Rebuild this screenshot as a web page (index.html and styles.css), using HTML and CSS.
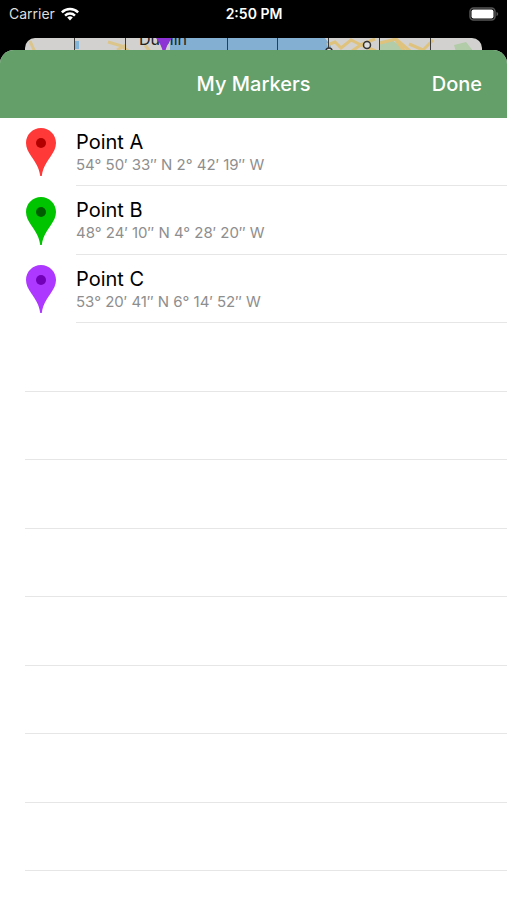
FILE: index.html
```html
<!DOCTYPE html>
<html lang="en">
<head>
    <meta charset="UTF-8">
    <meta name="viewport" content="width=device-width, initial-scale=1.0">
    <title>My Markers</title>
    <link rel="stylesheet" href="styles.css">
</head>
<body>
    <svg class="defs" aria-hidden="true">
        <symbol id="pin" viewBox="0 0 30 48">
            <path fill="currentColor" d="M15 0C6.700 0 0 6.700 0 15c0 5 2.400 9 5.200 13.200C9.500 34.500 13 39 14.200 48h1.600C17 39 20.500 34.500 24.800 28.200 27.600 24 30 20 30 15 30 6.700 23.300 0 15 0z"/>
            <circle class="pin-dot" cx="15" cy="15" r="5"/>
        </symbol>
    </svg>

    <div class="status-bar">
        <div class="carrier">
            <span>Carrier</span>
            <svg class="wifi" viewBox="0 0 18 14" aria-hidden="true">
                <path d="M9 13.500l2.800-2.900a4 4 0 0 0-5.600 0z"/>
                <path d="M3.200 7.700a8.200 8.200 0 0 1 11.600 0l-1.700 1.700a5.800 5.800 0 0 0-8.200 0z"/>
                <path d="M0 4.500a12.700 12.700 0 0 1 18 0l-1.700 1.700a10.300 10.300 0 0 0-14.600 0z"/>
            </svg>
        </div>
        <time>2:50 PM</time>
        <svg class="battery" viewBox="0 0 30 14" aria-hidden="true">
            <rect x="1" y="1" width="25" height="12" rx="3.500" fill="none" stroke="#555" stroke-width="1.500"/>
            <rect x="2.500" y="2.500" width="22" height="9" rx="2" fill="#fff"/>
            <path d="M27.500 5v4c1-.4 1.700-1.200 1.700-2s-.7-1.600-1.700-2z" fill="#555"/>
        </svg>
    </div>

    <svg class="map" viewBox="0 0 457 26" preserveAspectRatio="xMidYMin slice" aria-hidden="true">
        <rect width="457" height="26" fill="#d3d1cf"/>
        <path d="M5 3q3 8 7 14M83 4l14 4 10 8M92 12l9-5M120 7l6 8" fill="none" stroke="#dcc58a" stroke-width="3"/>
        <path d="M50 3h4v8h-4z" fill="#83b5d8"/>
        <path d="M145 0H300l6 8-4 18H145z" fill="#83b0d2"/>
        <path d="M355 3l12-1 14 10h-26zM429 7l12-3 8 10h-18z" fill="#b2cca9"/>
        <path d="M302 7l8-3 6 6 10-8 12 6 13 5M327 13l10-7 13-5M355 5l16-4 14 12M371 2l9 12M384 6l14 6 10-10" fill="none" stroke="#dfc27b" stroke-width="3"/>
        <path d="M49.500 0v26M100.500 0v26M202.500 0v26M252.500 0v26M303.500 0v26M354.500 0v26M405.500 0v26" stroke="#3b3b3b"/>
        <g fill="#ddd" stroke="#333" stroke-width="1.500">
            <circle cx="304" cy="13" r="3"/>
            <circle cx="342" cy="7" r="3.500"/>
        </g>
        <text class="map-label" x="114" y="7">Dublin</text>
        <path d="M131 0h16q-5 6-7 14h-2q-2-8-7-14z" fill="#8d32d4"/>
    </svg>

    <main class="sheet">
        <header class="nav-bar">
            <h1>My Markers</h1>
            <button class="done-btn" type="button">Done</button>
        </header>
        <ul class="markers">
            <li class="marker">
                <svg class="pin pin-red" aria-hidden="true"><use href="#pin"/></svg>
                <div class="marker-text">
                    <span class="name">Point A</span>
                    <span class="coords">54° 50′ 33″ N 2° 42′ 19″ W</span>
                </div>
            </li>
            <li class="marker">
                <svg class="pin pin-green" aria-hidden="true"><use href="#pin"/></svg>
                <div class="marker-text">
                    <span class="name">Point B</span>
                    <span class="coords">48° 24′ 10″ N 4° 28′ 20″ W</span>
                </div>
            </li>
            <li class="marker">
                <svg class="pin pin-purple" aria-hidden="true"><use href="#pin"/></svg>
                <div class="marker-text">
                    <span class="name">Point C</span>
                    <span class="coords">53° 20′ 41″ N 6° 14′ 52″ W</span>
                </div>
            </li>
        </ul>
        <!-- blank rows below the saved markers -->
        <div class="blank-row"></div>
        <div class="blank-row"></div>
        <div class="blank-row"></div>
        <div class="blank-row"></div>
        <div class="blank-row"></div>
        <div class="blank-row"></div>
        <div class="blank-row"></div>
        <div class="blank-row"></div>
    </main>
</body>
</html>
```

FILE: styles.css
```css
* {
    box-sizing: border-box;
}

body {
    margin: 0;
    min-height: 100vh;
    display: flex;
    flex-direction: column;
    background-color: #000;
    color: #000;
    font-family: Inter, "Liberation Sans", sans-serif;
}

.defs {
    position: absolute;
    width: 0;
    height: 0;
}

.status-bar {
    display: grid;
    grid-template-columns: 1fr auto 1fr;
    align-items: center;
    height: 38px;
    padding: 0 8px 11px 9px;
    color: #fff;
    font-size: 14px;
}

.status-bar time {
    font-weight: 600;
}

.carrier {
    display: flex;
    align-items: center;
    gap: 6px;
    color: #ddd;
}

.wifi {
    width: 18px;
    height: 14px;
    fill: #fff;
}

.battery {
    justify-self: end;
    width: 30px;
    height: 14px;
}

.map {
    display: block;
    height: 26px;
    margin: 0 25px;
    border-radius: 10px;
}

.map-label {
    font-size: 16px;
    fill: #222;
}

.sheet {
    position: relative;
    flex: 1;
    display: flex;
    flex-direction: column;
    margin-top: -14px;
    padding-bottom: 29px;
    background-color: #fff;
    border-radius: 14px 14px 0 0;
    overflow: hidden;
}

.nav-bar {
    display: grid;
    grid-template-columns: 1fr auto 1fr;
    align-items: center;
    height: 68px;
    padding: 0 25px;
    background-color: #649e68;
    color: #fff;
}

.nav-bar h1 {
    grid-column: 2;
    margin: 0;
    font-size: 20px;
    font-weight: 500;
}

.done-btn {
    justify-self: end;
    padding: 0;
    border: none;
    background: none;
    color: inherit;
    font: inherit;
    font-size: 20px;
    font-weight: 500;
    cursor: pointer;
}

.markers {
    flex: 3 0 auto;
    display: flex;
    flex-direction: column;
    margin: 0;
    padding: 0;
    list-style: none;
}

.marker {
    flex: 1 0 68px;
    display: flex;
    align-items: center;
    gap: 20px;
    padding-left: 26px;
}

.pin {
    width: 30px;
    height: 48px;
}

.pin-red {
    color: #ff3838;
}

.pin-green {
    color: #00c400;
}

.pin-purple {
    color: #ad38ff;
}

.pin-dot {
    fill: var(--dot);
}

.pin-red {
    --dot: #b20000;
}

.pin-green {
    --dot: #005c00;
}

.pin-purple {
    --dot: #7200b8;
}

.marker-text {
    flex: 1;
    align-self: stretch;
    display: flex;
    flex-direction: column;
    justify-content: center;
    padding-top: 2px;
    border-bottom: 1px solid #e6e6e6;
}

.name {
    font-size: 20px;
    line-height: 24px;
}

.coords {
    color: #8e8e8e;
    font-size: 15px;
    line-height: 22px;
}

.blank-row {
    flex: 1 0 68px;
    margin-left: 25px;
    border-bottom: 1px solid #e6e6e6;
}
```
